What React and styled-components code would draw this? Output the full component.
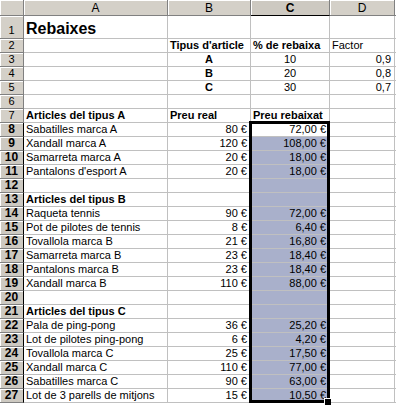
import React from "react";
import styled, { createGlobalStyle } from "styled-components";

const GlobalStyle = createGlobalStyle`
  html, body {
    margin: 0;
    padding: 0;
    background: #ffffff;
  }
  body {
    font-family: "Liberation Sans", Arial, sans-serif;
    font-size: 11px;
    color: #000000;
  }
`;

// Sheet data: each row holds cells for columns A, B, C, D
// a cell is either a string or { v, bold, align, title }
const rows = [
  [{ v: "Rebaixes", title: true }, "", "", ""],
  ["", { v: "Tipus d'article", bold: true }, { v: "% de rebaixa", bold: true }, "Factor"],
  ["", { v: "A", bold: true, align: "center" }, { v: "10", align: "center" }, { v: "0,9", align: "right" }],
  ["", { v: "B", bold: true, align: "center" }, { v: "20", align: "center" }, { v: "0,8", align: "right" }],
  ["", { v: "C", bold: true, align: "center" }, { v: "30", align: "center" }, { v: "0,7", align: "right" }],
  ["", "", "", ""],
  [{ v: "Articles del tipus A", bold: true }, { v: "Preu real", bold: true }, { v: "Preu rebaixat", bold: true }, ""],
  ["Sabatilles marca A", "80 €", "72,00 €"],
  ["Xandall marca A", "120 €", "108,00 €"],
  ["Samarreta marca A", "20 €", "18,00 €"],
  ["Pantalons d'esport A", "20 €", "18,00 €"],
  ["", "", ""],
  [{ v: "Articles del tipus B", bold: true }, "", ""],
  ["Raqueta tennis", "90 €", "72,00 €"],
  ["Pot de pilotes de tennis", "8 €", "6,40 €"],
  ["Tovallola marca B", "21 €", "16,80 €"],
  ["Samarreta marca B", "23 €", "18,40 €"],
  ["Pantalons marca B", "23 €", "18,40 €"],
  ["Xandall marca B", "110 €", "88,00 €"],
  ["", "", ""],
  [{ v: "Articles del tipus C", bold: true }, "", ""],
  ["Pala de ping-pong", "36 €", "25,20 €"],
  ["Lot de pilotes ping-pong", "6 €", "4,20 €"],
  ["Tovallola marca C", "25 €", "17,50 €"],
  ["Xandall marca C", "110 €", "77,00 €"],
  ["Sabatilles marca C", "90 €", "63,00 €"],
  ["Lot de 3 parells de mitjons", "15 €", "10,50 €"],
];

const columns = ["A", "B", "C", "D", ""];
const SEL_FIRST = 8;
const SEL_LAST = 27;

export default function App() {
  return (
    <>
      <GlobalStyle />
      <Sheet>
        <Corner />
        {columns.map((c) => (
          <ColHeader key={"h" + c} selected={c === "C"}>
            {c}
          </ColHeader>
        ))}

        {rows.map((row, i) => {
          const n = i + 1;
          const rowSel = n >= SEL_FIRST && n <= SEL_LAST;
          const cells = [row[0], row[1], row[2], row[3] || "", ""];
          return (
            <React.Fragment key={n}>
              <RowHeader selected={rowSel} tall={n === 1}>
                {n}
              </RowHeader>
              {cells.map((cell, ci) => {
                const c = typeof cell === "string" ? { v: cell } : cell;
                // numbers in B and C of the price rows sit on the right
                const isPrice = n >= SEL_FIRST && (ci === 1 || ci === 2);
                const align = c.align || (isPrice ? "right" : "left");
                const shaded = rowSel && ci === 2 && n !== SEL_FIRST;
                return (
                  <Cell
                    key={ci}
                    align={align}
                    bold={c.bold}
                    title={c.title}
                    shaded={shaded}
                  >
                    {c.v}
                  </Cell>
                );
              })}
            </React.Fragment>
          );
        })}

        <Selection>
          <FillHandle />
        </Selection>
      </Sheet>
    </>
  );
}

const Sheet = styled.div`
  position: relative;
  display: grid;
  grid-template-columns: 24px 144px 83px 79px 65px 1fr;
  grid-template-rows: 16px 23px repeat(26, 14px);
  width: 396px;
  height: 405px;
  overflow: hidden;
  background: #ffffff;
`;

const HeaderBase = styled.div`
  box-sizing: border-box;
  background: #d4d0c8;
  border-right: 1px solid #808080;
  border-bottom: 1px solid #808080;
  box-shadow: inset 1px 1px 0 #ffffff;
  font-size: 11px;
  line-height: 13px;
  color: #000000;
  display: flex;
  justify-content: center;
`;

const Corner = styled(HeaderBase)``;

const ColHeader = styled(HeaderBase)`
  align-items: center;
  padding-top: 1px;
  font-size: 12px;
  font-weight: ${(p) => (p.selected ? "bold" : "normal")};
  border-bottom: 1px solid ${(p) => (p.selected ? "#000000" : "#808080")};
  background: ${(p) => (p.selected ? "#cdc9c1" : "#d4d0c8")};
`;

const RowHeader = styled(HeaderBase)`
  align-items: flex-end;
  padding-bottom: ${(p) => (p.tall ? "1px" : "0")};
  font-size: ${(p) => (p.selected ? "12px" : "11px")};
  font-weight: ${(p) => (p.selected ? "bold" : "normal")};
  border-right: 1px solid ${(p) => (p.selected ? "#000000" : "#808080")};
  background: ${(p) => (p.selected ? "#cdc9c1" : "#d4d0c8")};
`;

const Cell = styled.div`
  box-sizing: border-box;
  border-right: 1px solid #c0c0c0;
  border-bottom: 1px solid #c0c0c0;
  background: ${(p) => (p.shaded ? "#a9b0cb" : "#ffffff")};
  display: flex;
  align-items: flex-end;
  justify-content: ${(p) =>
    p.align === "right" ? "flex-end" : p.align === "center" ? "center" : "flex-start"};
  padding: 0 2px 0 2px;
  padding-right: ${(p) => (p.align === "right" ? "3px" : "2px")};
  white-space: nowrap;
  overflow: visible;
  font-size: ${(p) => (p.title ? "16px" : "11px")};
  line-height: ${(p) => (p.title ? "19px" : "13px")};
  font-weight: ${(p) => (p.bold || p.title ? "bold" : "normal")};
`;

// marquee around C8:C27, drawn over the cells
const Selection = styled.div`
  position: absolute;
  left: 249px;
  top: 121px;
  width: 81px;
  height: 282px;
  box-sizing: border-box;
  border: 3px solid #000000;
  pointer-events: none;
`;

const FillHandle = styled.div`
  position: absolute;
  right: -4px;
  bottom: -5px;
  width: 6px;
  height: 6px;
  background: #000000;
  border-left: 1px solid #ffffff;
  border-top: 1px solid #ffffff;
`;
